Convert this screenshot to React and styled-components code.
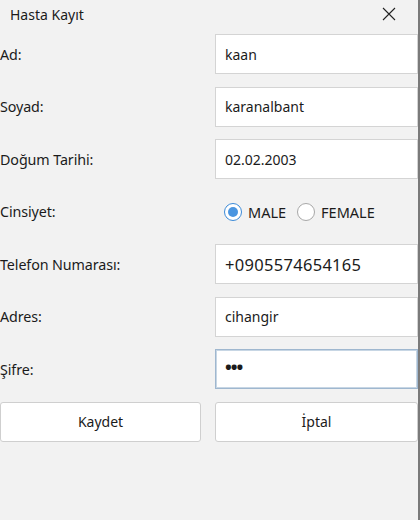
import React from "react";
import styled, { createGlobalStyle } from "styled-components";

const GlobalStyle = createGlobalStyle`
  html, body {
    margin: 0;
    padding: 0;
    background: #f2f2f2;
  }
  body {
    font-family: "Noto Sans", "Open Sans", sans-serif;
    color: #1b1b1b;
  }
`;

const Window = styled.div`
  width: 420px;
  height: 520px;
  box-sizing: border-box;
  background: #f2f2f2;
  border-right: 2px solid #7a7a7a;
  display: flex;
  flex-direction: column;
`;

const TitleBar = styled.div`
  height: 34px;
  display: flex;
  align-items: flex-start;
  justify-content: space-between;
  padding: 5px 22px 0 10px;
  box-sizing: border-box;
  font-size: 14px;
`;

const CloseButton = styled.div`
  width: 14px;
  height: 14px;
  margin-top: 2px;
  display: flex;
`;

const Form = styled.div`
  display: grid;
  grid-template-columns: 201px 203px;
  grid-auto-rows: 40px;
  column-gap: 14px;
  row-gap: 12.5px;
  align-items: center;
`;

const Label = styled.div`
  font-size: 14.3px;
  letter-spacing: -0.1px;
`;

const Field = styled.div`
  height: 40px;
  box-sizing: border-box;
  background: #fff;
  border: 1px solid ${(p) => (p.$focused ? "#9fb7cf" : "#d4d4d4")};
  ${(p) => p.$focused && "box-shadow: inset 0 0 0 1px #c7d6e4;"}
  display: flex;
  align-items: center;
  padding-left: 9px;
  font-size: ${(p) => (p.$large ? "16.5px" : "14px")};
  letter-spacing: ${(p) => (p.$large ? "0.3px" : "0")};
`;

const Dots = styled.span`
  font-size: 18px;
  letter-spacing: -1px;
  font-weight: bold;
  line-height: 1;
  margin-top: -4px;
`;

const RadioGroup = styled.div`
  display: flex;
  align-items: center;
  padding-left: 9px;
  font-size: 14.5px;
`;

const RadioOption = styled.label`
  display: flex;
  align-items: center;
  gap: 6px;
  margin-right: 11px;
`;

const RadioCircle = styled.span`
  width: 18px;
  height: 18px;
  box-sizing: border-box;
  border-radius: 50%;
  background: #fff;
  border: 1px solid ${(p) => (p.$checked ? "#3b8ad8" : "#a8a8a8")};
  display: flex;
  align-items: center;
  justify-content: center;
  &::after {
    content: "";
    display: ${(p) => (p.$checked ? "block" : "none")};
    width: 10px;
    height: 10px;
    border-radius: 50%;
    background: #4a95e0;
  }
`;

const Button = styled.div`
  height: 40px;
  box-sizing: border-box;
  background: #fff;
  border: 1px solid #cfcfcf;
  border-radius: 3px;
  display: flex;
  align-items: center;
  justify-content: center;
  font-size: 14px;
`;

const fields = [
  { label: "Ad:", value: "kaan" },
  { label: "Soyad:", value: "karanalbant" },
  { label: "Doğum Tarihi:", value: "02.02.2003" },
];

const fields2 = [
  { label: "Telefon Numarası:", value: "+0905574654165", large: true },
  { label: "Adres:", value: "cihangir" },
];

export default function App() {
  return (
    <Window>
      <GlobalStyle />
      <TitleBar>
        <span>Hasta Kayıt</span>
        <CloseButton>
          <svg width="14" height="14" viewBox="0 0 14 14">
            <path d="M1 1 L13 13 M13 1 L1 13" stroke="#222" strokeWidth="1.1" fill="none" />
          </svg>
        </CloseButton>
      </TitleBar>
      <Form>
        {fields.map((f) => (
          <React.Fragment key={f.label}>
            <Label>{f.label}</Label>
            <Field>{f.value}</Field>
          </React.Fragment>
        ))}
        <Label>Cinsiyet:</Label>
        <RadioGroup>
          <RadioOption>
            <RadioCircle $checked />
            MALE
          </RadioOption>
          <RadioOption>
            <RadioCircle />
            FEMALE
          </RadioOption>
        </RadioGroup>
        {fields2.map((f) => (
          <React.Fragment key={f.label}>
            <Label>{f.label}</Label>
            <Field $large={f.large}>{f.value}</Field>
          </React.Fragment>
        ))}
        <Label>Şifre:</Label>
        <Field $focused>
          <Dots>•••</Dots>
        </Field>
        <Button>Kaydet</Button>
        <Button>İptal</Button>
      </Form>
    </Window>
  );
}
